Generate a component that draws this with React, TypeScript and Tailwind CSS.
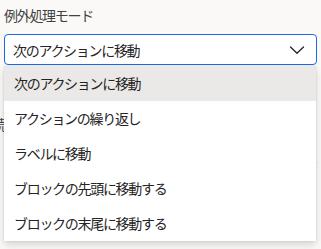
import React from "react";

const items = [
  "次のアクションに移動",
  "アクションの繰り返し",
  "ラベルに移動",
  "ブロックの先頭に移動する",
  "ブロックの末尾に移動する",
];

export default function App() {
  return (
    <div
      className="relative w-[321px] h-[249px] overflow-hidden bg-[#faf9f8] text-[14px] tracking-[-1.3px]"
      style={{ fontFamily: '"Noto Sans CJK JP", "Noto Sans", sans-serif' }}
    >
      <div className="px-[4px] pt-[5px]">
        <div className="h-[20px] leading-[20px] text-[#424242]">例外処理モード</div>
        <div className="mt-[9px] h-[31px] w-[313px] rounded-[4px] border border-[#1a6ae8] bg-white flex items-center pl-[8px] pr-[10px] text-[#242424]">
          <span className="flex-1 leading-[20px]">次のアクションに移動</span>
          <svg width="16" height="16" viewBox="0 0 16 16" className="mr-[1px]">
            <path d="M1.5 5 L8 11.2 L14.5 5" fill="none" stroke="#242424" strokeWidth="1.3" strokeLinecap="round" strokeLinejoin="round" />
          </svg>
        </div>
        <div className="mt-[49px] h-[20px] leading-[20px] ml-[-12px] text-[#424242]">続行</div>
        <div className="mt-[28px] h-px w-full bg-[#e0e0e0]" />
      </div>

      <div className="absolute left-[4px] top-[66px] w-[312px] bg-white shadow-[0_0_2px_rgba(0,0,0,0.12),0_4px_8px_rgba(0,0,0,0.14)] flex flex-col">
        {items.map((t, i) => (
          <div
            key={t}
            className={
              i === 0
                ? "h-[35px] flex items-center pl-[10px] bg-[#ebe9e7] text-[#242424]"
                : "h-[35px] flex items-center pl-[10px] text-[#242424]"
            }
          >
            {t}
          </div>
        ))}
      </div>
    </div>
  );
}
